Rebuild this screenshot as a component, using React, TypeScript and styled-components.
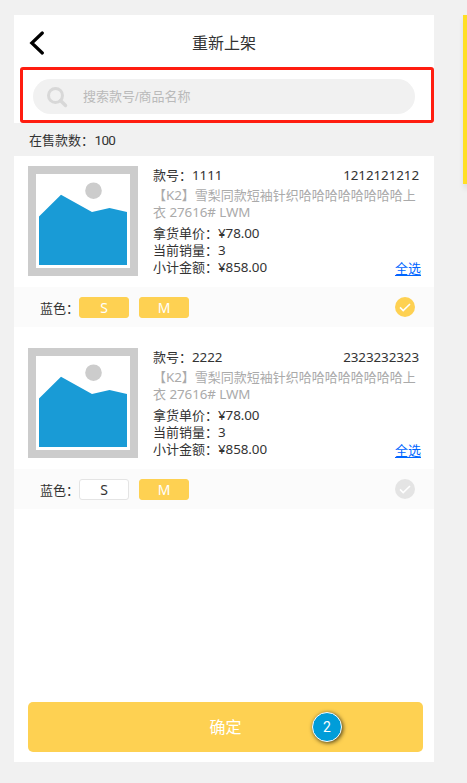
import React from "react";
import styled, { createGlobalStyle } from "styled-components";

const GlobalStyle = createGlobalStyle`
  * { box-sizing: border-box; }
  body {
    margin: 0;
    background: #f1f1f1;
    color: #333;
    font: 13px/17px "Noto Sans", "Noto Sans CJK SC", sans-serif;
    overflow: hidden;
  }
`;

const Canvas = styled.div`
  display: flex;
  align-items: flex-start;
  justify-content: space-between;
  height: 783px;
  padding: 15px 0 0 14px;
  overflow: hidden;
`;

const Phone = styled.main`
  display: flex;
  flex-direction: column;
  width: 420px;
  height: 747px;
  background: #fff;
`;

const Note = styled.aside`
  width: 4px;
  height: 169px;
  background: #ffdf25;
  box-shadow: 2px 4px 6px rgba(0, 0, 0, 0.16);
`;

const Header = styled.header`
  display: grid;
  grid-template-columns: 48px 1fr 48px;
  align-items: center;
  height: 52px;
  padding-top: 4px;
`;

const BackIcon = styled.svg`
  width: 16px;
  height: 24px;
  margin-left: 15px;
`;

const Title = styled.h1`
  margin: 0;
  color: #333;
  font-size: 16px;
  line-height: 24px;
  font-weight: 400;
  text-align: center;
`;

const SearchArea = styled.div`
  height: 56px;
  margin-left: 6px;
  padding: 9px 16px 9px 10px;
  border: 3px solid #ff1d10;
  border-radius: 3px;
`;

const SearchBox = styled.div`
  display: flex;
  align-items: center;
  height: 35px;
  padding-left: 14px;
  border-radius: 18px;
  background: #f1f1f1;
  color: #bababa;
  font-family: "Liberation Sans", "Noto Sans CJK SC", sans-serif;
`;

const SearchIcon = styled.svg`
  width: 21px;
  height: 21px;
  margin: 1px 15px 0 0;
`;

const CountBar = styled.div`
  display: flex;
  align-items: center;
  height: 33px;
  padding: 2px 0 0 15px;
  background: #f1f1f1;
`;

const CountValue = styled.span`
  margin-left: 0.5px;
  font-family: Roboto, sans-serif;
  font-size: 13.5px;
  letter-spacing: -0.7px;
`;

const ProductList = styled.div`
  display: flex;
  flex-direction: column;
  gap: 11px;
`;

const Product = styled.section`
  height: 171px;
`;

const Summary = styled.div`
  display: flex;
  height: 131px;
  padding: 10px 13px 0 14px;
`;

const Thumb = styled.svg`
  flex: none;
  width: 110px;
  height: 110px;
`;

const Info = styled.div`
  flex: 1;
  min-width: 0;
  margin-left: 15px;
`;

const Line = styled.div`
  display: flex;
  justify-content: space-between;
  height: 17px;
  white-space: nowrap;
`;

const Heading = styled(Line)`
  height: 18px;
  padding: 1px 2px 0 0;
`;

const Num = styled.span`
  font-size: 13.4px;
  line-height: 16px;
  letter-spacing: -0.08px;
`;

const Description = styled.p`
  width: 268px;
  height: 34px;
  margin: 3px 0 4px;
  color: #aaa;
`;

const SelectAll = styled.a`
  padding-top: 1px;
  color: #06f;
  text-decoration: underline;
  text-decoration-thickness: 1px;
  text-underline-offset: 2px;
`;

const Variants = styled.div`
  display: flex;
  align-items: center;
  gap: 10px;
  height: 40px;
  padding: 1px 19px 0 26px;
  background: #fbfbfb;
`;

const ColorName = styled.span`
  width: 39px;
  margin-right: -10px;
  padding-top: 2px;
  white-space: nowrap;
`;

const Size = styled.button<{ $selected: boolean }>`
  width: 50px;
  height: 21px;
  padding: 0;
  border: 1px solid ${(p) => (p.$selected ? "#fed152" : "#e4e4e4")};
  border-radius: 3px;
  background: ${(p) => (p.$selected ? "#fed152" : "#fff")};
  color: ${(p) => (p.$selected ? "#fff" : "#333")};
  font: inherit;
  font-size: 14px;
  line-height: 20px;
`;

const CheckIcon = styled.svg`
  width: 20px;
  height: 20px;
  margin: 0 0 1px auto;
`;

const Footer = styled.footer`
  margin-top: auto;
  padding: 0 11px 10px 14px;
`;

const Confirm = styled.button`
  position: relative;
  display: block;
  width: 100%;
  height: 50px;
  padding: 0;
  border: 0;
  border-radius: 5px;
  background: #fed152;
  color: #fff;
  font: inherit;
  font-size: 16px;
`;

const Badge = styled.span`
  position: absolute;
  top: 10px;
  right: 81px;
  width: 30px;
  height: 30px;
  border: 1px solid #fff;
  border-radius: 50%;
  background: #009dd9;
  box-shadow: 1px 1px 4px rgba(0, 0, 0, 0.7);
  font: 14px/29px Roboto, sans-serif;
  text-align: center;
`;

interface Item {
  code: string;
  serial: string;
  sizes: { name: string; selected: boolean }[];
  checked: boolean;
}

const items: Item[] = [
  {
    code: "1111",
    serial: "1212121212",
    sizes: [{ name: "S", selected: true }, { name: "M", selected: true }],
    checked: true,
  },
  {
    code: "2222",
    serial: "2323232323",
    sizes: [{ name: "S", selected: false }, { name: "M", selected: true }],
    checked: false,
  },
];

function ProductCard({ item }: { item: Item }) {
  return (
    <Product>
      <Summary>
        <Thumb viewBox="0 0 110 110">
          <path fill="#ccc" d="M0 0h110v110H0z" />
          <path fill="#fff" d="M8 8h94v94H8z" />
          <circle cx="65.5" cy="24.7" r="8.3" fill="#ccc" />
          <path fill="#199bd6" d="M11 50.5 33 28.7 64 46l17.500-4L99 46v53H11z" />
        </Thumb>
        <Info>
          <Heading>
            <span>款号：<Num>{item.code}</Num></span>
            <Num>{item.serial}</Num>
          </Heading>
          <Description>
            【<Num>K2</Num>】雪梨同款短袖针织哈哈哈哈哈哈哈哈上<br />衣 <Num>27616# LWM</Num>
          </Description>
          <Line><span>拿货单价：<Num>¥78.00</Num></span></Line>
          <Line><span>当前销量：<Num>3</Num></span></Line>
          <Line>
            <span>小计金额：<Num>¥858.00</Num></span>
            <SelectAll>全选</SelectAll>
          </Line>
        </Info>
      </Summary>
      <Variants>
        <ColorName>蓝色：</ColorName>
        {item.sizes.map((s) => (
          <Size key={s.name} $selected={s.selected}>{s.name}</Size>
        ))}
        <CheckIcon viewBox="0 0 20 20">
          <circle cx="10" cy="10" r="10" fill={item.checked ? "#fed152" : "#e4e4e4"} />
          <path d="m5 10.400 3.200 3.200L15 7" fill="none" stroke="#fff" strokeWidth="1.500" />
        </CheckIcon>
      </Variants>
    </Product>
  );
}

export default function App() {
  return (
    <>
      <GlobalStyle />
      <Canvas>
        <Phone>
          <Header>
            <BackIcon viewBox="0 0 16 24">
              <path
                d="M13.300 2 2.800 12l10.500 10"
                fill="none"
                stroke="#000"
                strokeWidth="3.200"
                strokeLinecap="round"
              />
            </BackIcon>
            <Title>重新上架</Title>
          </Header>
          <SearchArea>
            <SearchBox>
              <SearchIcon viewBox="0 0 21 21">
                <circle cx="8.500" cy="8.500" r="7" fill="none" stroke="#d8d8d8" strokeWidth="3" />
                <path d="m13.500 13.500 5 5" stroke="#d8d8d8" strokeWidth="3.500" strokeLinecap="round" />
              </SearchIcon>
              搜索款号/商品名称
            </SearchBox>
          </SearchArea>
          <CountBar>在售款数：<CountValue>100</CountValue></CountBar>
          <ProductList>
            {items.map((item) => <ProductCard key={item.code} item={item} />)}
          </ProductList>
          <Footer>
            <Confirm>确定<Badge>2</Badge></Confirm>
          </Footer>
        </Phone>
        <Note />
      </Canvas>
    </>
  );
}
